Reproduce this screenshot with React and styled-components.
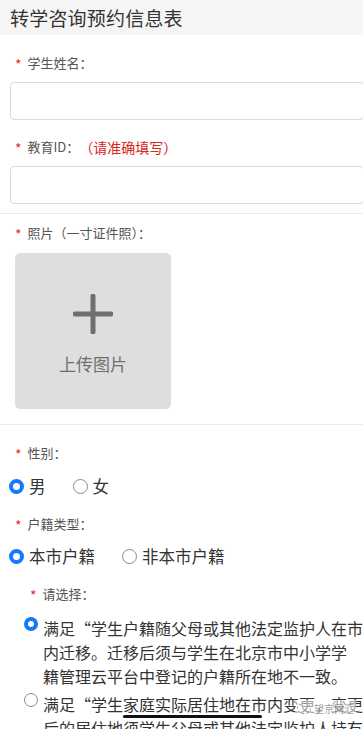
import React from "react";
import styled, { createGlobalStyle } from "styled-components";

const GlobalStyle = createGlobalStyle`
  html, body {
    margin: 0;
    padding: 0;
    background: #fff;
    overflow: hidden;
  }
  body {
    font-family: "Noto Sans CJK SC", "Noto Sans", sans-serif;
  }
`;

const App = () => {
  return (
    <Page>
      <GlobalStyle />
      <Header>
        <Title>转学咨询预约信息表</Title>
      </Header>

      <Section $pad={9}>
        <Label>
          <Star>*</Star>学生姓名：
        </Label>
        <Input />
        <Label $top={17}>
          <Star>*</Star>教育ID：<Hint>（请准确填写）</Hint>
        </Label>
        <Input />
      </Section>

      <Section $pad={15}>
        <Label $top={9}>
          <Star>*</Star>照片（一寸证件照）：
        </Label>
        <UploadBox>
          <svg width="40" height="40" viewBox="0 0 40 40">
            <path
              d="M20 2 V38 M2 20 H38"
              stroke="#6f6f6f"
              strokeWidth="5"
              strokeLinecap="round"
              fill="none"
            />
          </svg>
          <UploadText>上传图片</UploadText>
        </UploadBox>
      </Section>

      <Block>
        <Label $top={18}>
          <Star>*</Star>性别：
        </Label>
        <RadioRow $top={11}>
          <RadioItem>
            <Radio $checked />
            男
          </RadioItem>
          <RadioItem>
            <Radio />
            女
          </RadioItem>
        </RadioRow>

        <Label $top={16}>
          <Star>*</Star>户籍类型：
        </Label>
        <RadioRow>
          <RadioItem>
            <Radio $checked />
            本市户籍
          </RadioItem>
          <RadioItem>
            <Radio />
            非本市户籍
          </RadioItem>
        </RadioRow>

        <SubBlock>
          <Label $top={16}>
            <Star>*</Star>请选择：
          </Label>
          <OptionList>
            <Option>
              <Radio $checked $size={14} />
              <OptionText>
                <Line>满足“学生户籍随父母或其他法定监护人在市</Line>
                <Line>内迁移。迁移后须与学生在北京市中小学学</Line>
                <Line>籍管理云平台中登记的户籍所在地不一致。</Line>
              </OptionText>
            </Option>
            <Option>
              <Radio $size={14} />
              <OptionText>
                <Line>
                  满足“学生<Marked>家庭实际居住地在</Marked>市内变更，变更
                </Line>
                <Line>后的居住地须学生父母或其他法定监护人持有</Line>
              </OptionText>
            </Option>
          </OptionList>
        </SubBlock>
      </Block>

      <Watermark>
        <WmIcon />
        望京网汇
      </Watermark>
    </Page>
  );
};

export default App;

const Page = styled.div`
  position: relative;
  width: 363px;
  height: 729px;
  overflow: hidden;
  color: #333;
`;

const Header = styled.div`
  height: 35px;
  background: #f5f5f5;
  padding-left: 10px;
  display: flex;
  align-items: center;
`;

const Title = styled.div`
  font-size: 19px;
  color: #333;
  letter-spacing: 0.2px;
`;

const Section = styled.div`
  padding-bottom: ${(p) => p.$pad ?? 8}px;
  border-bottom: 1px solid #ececec;
`;

const Block = styled.div``;

const SubBlock = styled.div`
  padding-left: 15px;
`;

const Label = styled.div`
  padding: ${(p) => p.$top ?? 18}px 0 0 15px;
  height: 20px;
  line-height: 20px;
  font-size: 13px;
  color: #555;
  display: flex;
  align-items: center;
  white-space: nowrap;
`;

const Star = styled.span`
  color: #e12b2b;
  font-size: 14px;
  margin-right: 6px;
  position: relative;
  top: 1px;
`;

const Hint = styled.span`
  color: #d9261c;
  font-size: 14px;
`;

const Input = styled.div`
  margin: 9px 0 0 10px;
  width: 352px;
  height: 36px;
  border: 1px solid #dadada;
  border-radius: 4px;
  background: #fff;
`;

const UploadBox = styled.div`
  margin: 10px 0 0 15px;
  width: 156px;
  height: 156px;
  box-sizing: border-box;
  padding-top: 41px;
  background: #dedede;
  border-radius: 5px;
  display: flex;
  flex-direction: column;
  align-items: center;
`;

const UploadText = styled.div`
  margin-top: 20px;
  font-size: 17px;
  line-height: 20px;
  color: #6f6f6f;
`;

const RadioRow = styled.div`
  display: flex;
  align-items: center;
  height: 24px;
  margin-top: ${(p) => p.$top ?? 10}px;
  padding-left: 9px;
`;

const RadioItem = styled.div`
  display: flex;
  align-items: center;
  font-size: 16.5px;
  color: #333;
  margin-right: 27px;
`;

const Radio = styled.span`
  flex: none;
  box-sizing: border-box;
  width: ${(p) => p.$size ?? 15}px;
  height: ${(p) => p.$size ?? 15}px;
  border-radius: 50%;
  background: #fff;
  border: ${(p) => (p.$checked ? "4.5px solid #1677ff" : "1.5px solid #8a8a8a")};
  margin-right: 5px;
`;

const OptionList = styled.div`
  margin-top: 12px;
  padding-left: 9px;
  display: flex;
  flex-direction: column;
  gap: 4px;
`;

const Option = styled.div`
  display: flex;
  align-items: flex-start;

  & > ${Radio} {
    margin-top: 1px;
  }
`;

const OptionText = styled.div`
  font-size: 16px;
  line-height: 24px;
  color: #333;
`;

const Line = styled.div`
  white-space: nowrap;
`;

const Marked = styled.span`
  position: relative;

  &::after {
    content: "";
    position: absolute;
    left: 0;
    top: 23px;
    width: 139px;
    height: 3px;
    border-radius: 2px;
    background: #111;
  }
`;

const Watermark = styled.div`
  position: absolute;
  left: 295px;
  top: 700px;
  display: flex;
  align-items: center;
  gap: 3px;
  font-size: 10px;
  color: rgba(120, 120, 120, 0.75);
  background: rgba(255, 255, 255, 0.55);
  padding: 1px 2px;
`;

const WmIcon = styled.span`
  width: 12px;
  height: 9px;
  border: 1px dashed rgba(130, 130, 130, 0.8);
  border-radius: 50%;
`;
